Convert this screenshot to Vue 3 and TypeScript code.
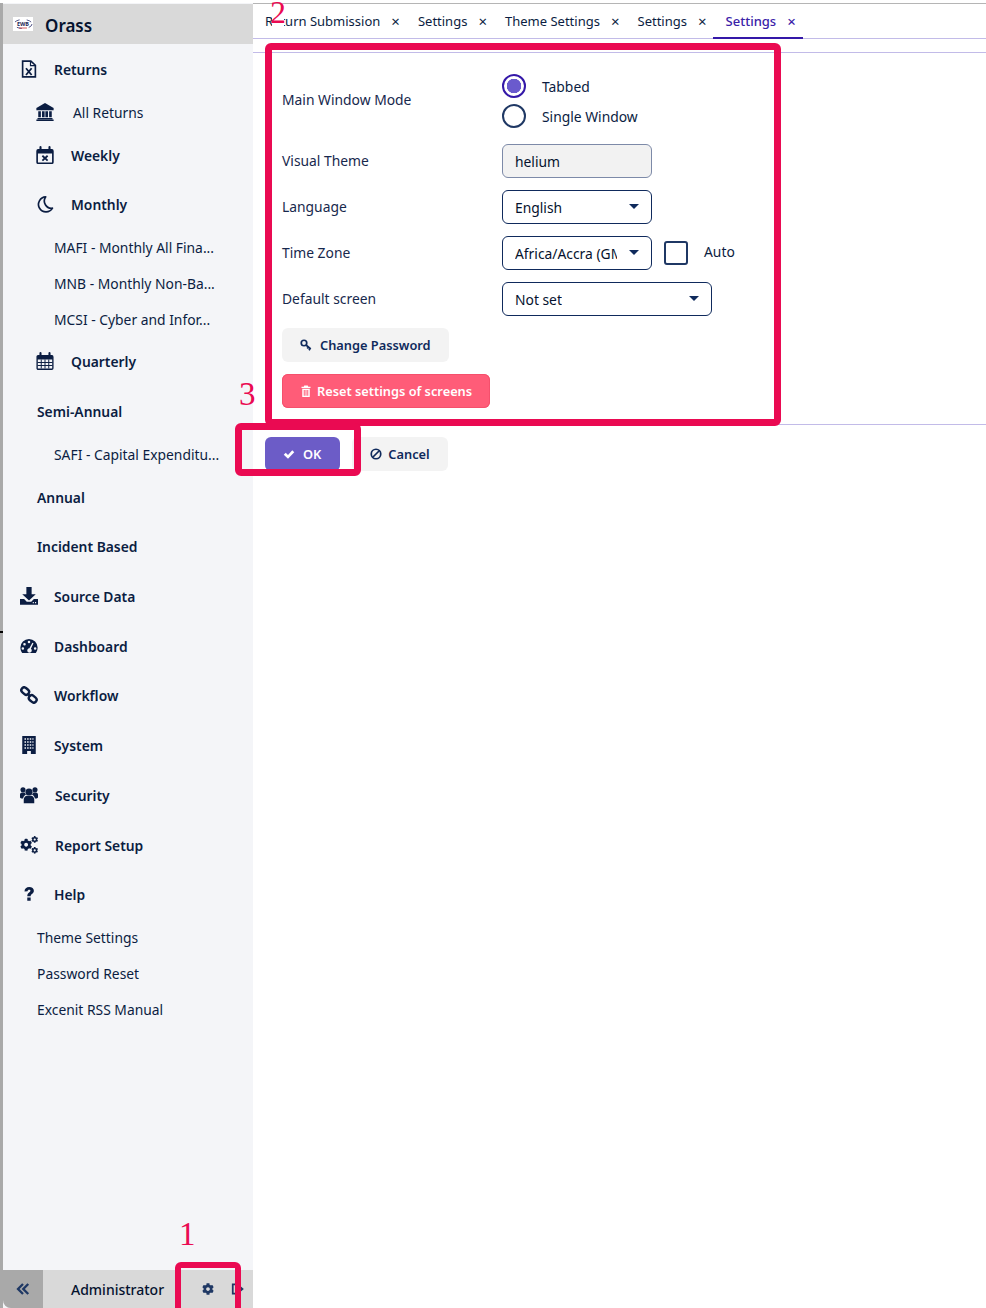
<script setup lang="ts">
type NavItem = {
  label: string
  h: number
  left: number
  icon?: string
  gap?: number
  strong?: boolean
}

const cogPath =
  'M487.4 315.7l-42.6-24.6c4.3-23.2 4.3-47 0-70.2l42.6-24.6c4.9-2.8 7.1-8.6 5.5-14-11.1-35.6-30-67.8-54.7-94.6-3.8-4.1-10-5.1-14.8-2.3L380.8 110c-17.9-15.4-38.5-27.3-60.8-35.1V25.8c0-5.6-3.9-10.5-9.4-11.7-36.7-8.2-74.3-7.8-109.2 0-5.5 1.2-9.4 6.1-9.4 11.7V75c-22.2 7.9-42.8 19.8-60.8 35.1L88.7 85.5c-4.9-2.8-11-1.9-14.8 2.3-24.7 26.7-43.6 58.9-54.7 94.6-1.7 5.4.6 11.2 5.5 14L67.3 221c-4.3 23.2-4.3 47 0 70.2l-42.6 24.6c-4.9 2.8-7.1 8.6-5.5 14 11.1 35.6 30 67.8 54.7 94.6 3.8 4.1 10 5.1 14.8 2.3l42.6-24.6c17.9 15.4 38.5 27.3 60.8 35.1v49.2c0 5.6 3.9 10.5 9.4 11.7 36.7 8.2 74.3 7.8 109.2 0 5.5-1.2 9.4-6.1 9.4-11.7v-49.2c22.2-7.9 42.8-19.8 60.8-35.1l42.6 24.6c4.9 2.8 11 1.9 14.8-2.3 24.7-26.7 43.6-58.9 54.7-94.6 1.5-5.5-.7-11.3-5.6-14.1zM256 336c-44.1 0-80-35.9-80-80s35.9-80 80-80 80 35.9 80 80-35.9 80-80 80z'

// icons are drawn on a 24x24 box, currentColor
const icons: Record<string, string> = {
  fileX:
    '<path d="M3.500 1.500h11L20.500 7v15.500h-17z" fill="none" stroke="currentColor" stroke-width="2.200"/><path d="M14 1.500V7.500h6.500" fill="none" stroke="currentColor" stroke-width="1.600"/><path d="M8 11l7.500 9M15.500 11L8 20" stroke="currentColor" stroke-width="2.400"/>',
  bank:
    '<path d="M12 0L0.500 6.500v3h23v-3z" fill="currentColor"/><path d="M3 11h3.500v8H3zM8 11h3.500v8H8zM12.500 11H16v8h-3.500zM17.500 11H21v8h-3.500zM2 20h20v1.500H2zM0.500 22h23v2h-23z" fill="currentColor"/>',
  calX:
    '<rect x="1.500" y="5" width="21" height="18" rx="1.500" fill="none" stroke="currentColor" stroke-width="2.200"/><path d="M1.500 5h21v5h-21z" fill="currentColor"/><path d="M6 1.500v5M18 1.500v5" stroke="currentColor" stroke-width="2.800" stroke-linecap="round"/><path d="M8.500 13l7 6.500M15.500 13l-7 6.500" stroke="currentColor" stroke-width="2.400"/>',
  moon:
    '<path d="M13 2.500A10 10 0 1 0 22 17.500 9.500 9.500 0 0 1 13 2.500z" fill="none" stroke="currentColor" stroke-width="2.200" stroke-linejoin="round"/>',
  calGrid:
    '<rect x="1.500" y="5" width="21" height="18" rx="1.500" fill="none" stroke="currentColor" stroke-width="1.800"/><path d="M1.500 5h21v5h-21z" fill="currentColor"/><path d="M6 1.500v5M18 1.500v5" stroke="currentColor" stroke-width="2.800" stroke-linecap="round"/><path d="M2 14h20M2 18h20M7 10v12M12 10v12M17 10v12" stroke="currentColor" stroke-width="1.300"/>',
  download:
    '<path d="M8.500 0h7v9.500h5.500l-9 8.500-9-8.500h5.500z" fill="currentColor"/><path fill-rule="evenodd" d="M0 16h5.500l3.500 3.500h6l3.500-3.500H24v7.500H0zM17 20h1.500v1.500H17zM20 20h1.500v1.500H20z" fill="currentColor"/>',
  gauge:
    '<path fill-rule="evenodd" d="M12 2.500A11.500 11.500 0 0 0 0.500 14c0 2.600 1 5.300 2.400 7.300h18.200c1.400-2 2.400-4.700 2.400-7.300A11.500 11.500 0 0 0 12 2.500zM12 5a1.700 1.700 0 1 1 0 3.400A1.700 1.700 0 0 1 12 5zM6 8a1.700 1.700 0 1 1 0 3.400A1.700 1.700 0 0 1 6 8zM3.800 13.500a1.700 1.700 0 1 1 0 3.400 1.700 1.700 0 0 1 0-3.400zM20.200 13.500a1.700 1.700 0 1 1 0 3.400 1.700 1.700 0 0 1 0-3.400zM16.500 7.500l1.500.8-3.500 7.200a3 3 0 1 1-2-.600z" fill="currentColor"/>',
  link:
    '<rect x="1.500" y="3" width="11" height="7.500" rx="3.700" transform="rotate(40 7 6.700)" fill="none" stroke="currentColor" stroke-width="3.200"/><rect x="11.500" y="13.500" width="11" height="7.500" rx="3.700" transform="rotate(40 17 17.200)" fill="none" stroke="currentColor" stroke-width="3.200"/><path d="M10 10l4 4" stroke="currentColor" stroke-width="3"/>',
  building:
    '<path fill-rule="evenodd" d="M3 0h18v24h-6.500v-4h-5v4H3zM6 3v2h2V3zM9.500 3v2h2V3zM13 3v2h2V3zM16.500 3v2h1.500V3zM6 7v2h2V7zM9.500 7v2h2V7zM13 7v2h2V7zM16.500 7v2h1.500V7zM6 11v2h2v-2zM9.500 11v2h2v-2zM13 11v2h2v-2zM16.500 11v2h1.500v-2zM6 15v2h2v-2zM9.500 15v2h2v-2zM13 15v2h2v-2zM16.500 15v2h1.500v-2z" fill="currentColor"/>',
  users:
    '<circle cx="12" cy="8" r="4.800" fill="currentColor"/><circle cx="4" cy="5" r="3.400" fill="currentColor"/><circle cx="20" cy="5" r="3.400" fill="currentColor"/><path d="M5 23v-5c0-3 2.500-5 4-5h6c1.500 0 4 2 4 5v5z" fill="currentColor"/><path d="M0 15v-3.500C0 9.800 1.200 8.500 2.800 8.500h3.400c.5 1.200 1.100 2.200 2 2.900-2 .8-3.600 2.600-4 5.100H2c-1 0-2-.5-2-1.500zM24 15v-3.500c0-1.700-1.200-3-2.800-3h-3.400c-.5 1.200-1.100 2.200-2 2.900 2 .8 3.600 2.600 4 5.100H22c1 0 2-.5 2-1.500z" fill="currentColor"/>',
  cogs:
    `<g transform="translate(0 3.500) scale(0.0320)"><path fill="currentColor" d="${cogPath}"/></g>` +
    `<g transform="translate(15 0) scale(0.0180)"><path fill="currentColor" d="${cogPath}"/></g>` +
    `<g transform="translate(15 14.500) scale(0.0180)"><path fill="currentColor" d="${cogPath}"/></g>`,
  question:
    '<path d="M6 8.500C6 4.500 8.800 2.500 12.300 2.500c3.700 0 6.200 2.100 6.200 5.200 0 4.200-4.300 4.300-4.300 7.300h-4.500c0-4.800 4.200-5 4.200-7.200 0-.9-.7-1.400-1.700-1.400-1.200 0-1.900.7-2.100 2zM9.700 16.500h4.500v4.500H9.700z" fill="currentColor"/>',
  cog: `<g transform="scale(0.0469)"><path fill="currentColor" d="${cogPath}"/></g>`,
  key:
    '<circle cx="8" cy="8" r="5.500" fill="none" stroke="currentColor" stroke-width="3.400"/><path d="M12 12l9.500 8M16.500 16l-2 3M20 19.500l-2 3" stroke="currentColor" stroke-width="3.400"/>',
  trash:
    '<path d="M8.500 1h7l1 2.500H21v2.500H3V3.500h4.500z" fill="currentColor"/><path fill-rule="evenodd" d="M4.500 7.500h15V24h-15zM7.500 10v11.500h2V10zM11 10v11.500h2V10zM14.500 10v11.500h2V10z" fill="currentColor"/>',
  check:
    '<path d="M1.500 13.500L5.500 9.500 10 14 18.500 4.500 22.500 8.500 10 21.500z" fill="currentColor"/>',
  ban:
    '<circle cx="12" cy="12" r="9.500" fill="none" stroke="currentColor" stroke-width="3.400"/><path d="M5.500 18.500l13-13" stroke="currentColor" stroke-width="3.400"/>',
  doubleLeft:
    '<path d="M12 3.500L3.500 12l8.500 8.500M21 3.500L12.500 12l8.500 8.500" fill="none" stroke="currentColor" stroke-width="4"/>',
  signOut:
    '<path d="M9 4H3v16h6" fill="none" stroke="currentColor" stroke-width="3"/><path d="M14 5l8 7-8 7v-4H8V9h6z" fill="currentColor"/>',
}

const nav: NavItem[] = [
  { label: 'Returns', h: 52, left: 20, icon: 'fileX', strong: true },
  { label: 'All Returns', h: 34, left: 36, icon: 'bank', gap: 19 },
  { label: 'Weekly', h: 52, left: 36, icon: 'calX', gap: 17, strong: true },
  { label: 'Monthly', h: 46, left: 36, icon: 'moon', gap: 17, strong: true },
  { label: 'MAFI - Monthly All Fina...', h: 40, left: 54 },
  { label: 'MNB - Monthly Non-Ba...', h: 32, left: 54 },
  { label: 'MCSI - Cyber and Infor...', h: 40, left: 54 },
  { label: 'Quarterly', h: 44, left: 36, icon: 'calGrid', gap: 17, strong: true },
  { label: 'Semi-Annual', h: 56, left: 37, strong: true },
  { label: 'SAFI - Capital Expenditu...', h: 30, left: 54 },
  { label: 'Annual', h: 56, left: 37, strong: true },
  { label: 'Incident Based', h: 42, left: 37, strong: true },
  { label: 'Source Data', h: 58, left: 20, icon: 'download', strong: true },
  { label: 'Dashboard', h: 42, left: 20, icon: 'gauge', strong: true },
  { label: 'Workflow', h: 56, left: 20, icon: 'link', strong: true },
  { label: 'System', h: 44, left: 20, icon: 'building', strong: true },
  { label: 'Security', h: 56, left: 20, icon: 'users', gap: 17, strong: true },
  { label: 'Report Setup', h: 44, left: 20, icon: 'cogs', gap: 17, strong: true },
  { label: 'Help', h: 54, left: 20, icon: 'question', strong: true },
  { label: 'Theme Settings', h: 32, left: 37 },
  { label: 'Password Reset', h: 40, left: 37 },
  { label: 'Excenit RSS Manual', h: 32, left: 37 },
]

const tabs = ['Return Submission', 'Settings', 'Theme Settings', 'Settings', 'Settings']
const activeTab = 4
</script>

<template>
  <div class="page">
    <aside class="sidebar">
      <header class="brand">
        <svg class="logo" viewBox="0 0 20 14">
          <rect width="20" height="14" fill="#fff" />
          <ellipse cx="10" cy="7" rx="9" ry="4.500" fill="none" stroke="#2b2f6b" stroke-width="0.800" stroke-dasharray="5 7" />
          <text x="10" y="8.500" text-anchor="middle" font-size="5.500" font-weight="700" fill="#1c2452">EWB</text>
          <path d="M6 11h8" stroke="#c33" stroke-width="0.800" />
        </svg>
        <span class="brand-name">Orass</span>
      </header>

      <nav class="nav">
        <div
          v-for="item in nav"
          :key="item.label"
          class="nav-row"
          :class="{ strong: item.strong }"
          :style="{ height: item.h + 'px', paddingLeft: item.left + 'px' }"
        >
          <svg
            v-if="item.icon"
            class="nav-icon"
            viewBox="0 0 24 24"
            :style="{ marginRight: (item.gap ?? 16) + 'px' }"
            v-html="icons[item.icon]"
          ></svg>
          <span>{{ item.label }}</span>
        </div>
      </nav>

      <footer class="side-footer">
        <div class="collapse">
          <svg class="foot-icon collapse-icon" viewBox="0 0 24 24" v-html="icons.doubleLeft"></svg>
        </div>
        <span class="user">Administrator</span>
        <svg class="foot-icon gear" viewBox="0 0 24 24" v-html="icons.cog"></svg>
        <svg class="foot-icon signout" viewBox="0 0 24 24" v-html="icons.signOut"></svg>
      </footer>
    </aside>

    <main class="main">
      <div class="tabs">
        <div v-for="(tab, i) in tabs" :key="i" class="tab" :class="{ active: i === activeTab }">
          <span>{{ tab }}</span>
          <span class="close">×</span>
        </div>
      </div>

      <section class="form">
        <div class="field-label first">Main Window Mode</div>
        <div class="radios">
          <label class="radio-row">
            <span class="radio checked"></span>
            <span>Tabbed</span>
          </label>
          <label class="radio-row">
            <span class="radio"></span>
            <span>Single Window</span>
          </label>
        </div>

        <div class="field-label">Visual Theme</div>
        <div class="control readonly">helium</div>

        <div class="field-label">Language</div>
        <div class="control select">
          <span class="value">English</span>
          <i class="caret"></i>
        </div>

        <div class="field-label">Time Zone</div>
        <div class="tz">
          <div class="control select">
            <span class="value">Africa/Accra (GMT+00:00)</span>
            <i class="caret"></i>
          </div>
          <span class="checkbox"></span>
          <span class="auto">Auto</span>
        </div>

        <div class="field-label">Default screen</div>
        <div class="control select wide">
          <span class="value">Not set</span>
          <i class="caret"></i>
        </div>

        <div class="btn-line">
          <button class="btn plain">
            <svg class="btn-icon" viewBox="0 0 24 24" v-html="icons.key"></svg>
            Change Password
          </button>
        </div>
        <div class="btn-line">
          <button class="btn danger">
            <svg class="btn-icon" viewBox="0 0 24 24" v-html="icons.trash"></svg>
            Reset settings of screens
          </button>
        </div>
      </section>

      <div class="actions">
        <button class="btn primary">
          <svg class="btn-icon" viewBox="0 0 24 24" v-html="icons.check"></svg>
          OK
        </button>
        <button class="btn plain cancel">
          <svg class="btn-icon" viewBox="0 0 24 24" v-html="icons.ban"></svg>
          Cancel
        </button>
      </div>
    </main>

    <!-- hand-drawn callouts that sit over the screenshot -->
    <div class="callout box-one"></div>
    <div class="callout box-two"></div>
    <div class="callout box-three"></div>
    <span class="mark mark-one">1</span>
    <span class="mark mark-two">2</span>
    <span class="mark mark-three">3</span>
    <i class="tick"></i>
  </div>
</template>

<style scoped>
.page {
  position: relative;
  display: flex;
  height: 1308px;
  overflow: hidden;
  padding-top: 3px;
  box-sizing: border-box;
  background: #fff;
  color: #0b1d42;
  font-family: "Noto Sans", "Open Sans", sans-serif;
  font-size: 13.85px;
}

.page::before {
  content: "";
  position: absolute;
  left: 0;
  right: 0;
  top: 3px;
  height: 1px;
  background: #b5b5b5;
}

.sidebar {
  display: flex;
  flex-direction: column;
  flex: none;
  width: 250px;
  border-left: 3px solid #a9a9a9;
  background: #f4f5f8;
  z-index: 1;
}

.brand {
  display: flex;
  align-items: center;
  flex: none;
  height: 40px;
  margin-top: 1px;
  padding-left: 10px;
  background: #d9d9d9;
}

.logo {
  width: 20px;
  height: 14px;
  margin-right: 12px;
}

.brand-name {
  margin-top: 2px;
  color: #05122e;
  font-size: 17px;
  font-weight: 600;
}

.nav {
  flex: 1;
  margin-top: -1px;
}

.nav-row {
  display: flex;
  align-items: center;
  box-sizing: border-box;
  margin-left: -3px;
  white-space: nowrap;
}

.nav-row.strong {
  font-weight: 600;
}

.nav-icon {
  flex: none;
  width: 18px;
  height: 18px;
}

.side-footer {
  position: relative;
  display: flex;
  align-items: center;
  flex: none;
  height: 38px;
  background: #d9d9d9;
  border-bottom-left-radius: 8px;
}

.collapse {
  display: flex;
  align-items: center;
  justify-content: center;
  align-self: stretch;
  width: 40px;
  background: #a9a9a9;
  border-bottom-left-radius: 8px;
}

.foot-icon {
  width: 14px;
  height: 14px;
}

.collapse-icon {
  color: #1f3864;
}

.user {
  margin-left: 28px;
  font-size: 14px;
  font-weight: 500;
  color: #05122e;
}

.gear {
  margin-left: 38px;
  width: 12px;
  height: 12px;
  color: #1f3864;
}

.signout {
  margin-left: 17px;
  color: #1f3864;
}

.main {
  flex: 1;
  min-width: 0;
}

.tabs {
  display: flex;
  height: 35px;
  box-sizing: border-box;
  margin-top: 1px;
  border-bottom: 1px solid #c2bbe8;
}

.tab {
  display: flex;
  align-items: center;
  gap: 11px;
  height: 35px;
  box-sizing: border-box;
  padding: 0 6px 2px 12px;
  font-size: 13px;
  white-space: nowrap;
}

.tab.active {
  padding: 0 7px 0 13px;
  border-bottom: 2px solid #3418a8;
  color: #3a22a8;
  font-weight: 500;
}

.close {
  margin-top: 2px;
  font-size: 15px;
  line-height: 1;
}

.form {
  display: grid;
  grid-template-columns: 220px 1fr;
  row-gap: 12px;
  align-items: center;
  margin-top: 13px;
  padding: 18px 0 16px 29px;
  border-top: 1px solid #c2bbe8;
  border-bottom: 1px solid #c2bbe8;
}

.field-label {
  margin-bottom: 2px;
  color: #17284d;
}

.field-label.first {
  margin-bottom: 4px;
}

.radios {
  display: flex;
  flex-direction: column;
  margin-bottom: 1px;
}

.radio-row {
  display: flex;
  align-items: center;
  gap: 16px;
  height: 30px;
}

.radio {
  display: block;
  box-sizing: border-box;
  width: 24px;
  height: 24px;
  border: 2px solid #1f3864;
  border-radius: 50%;
}

.radio.checked {
  border-color: #3418a8;
  background: radial-gradient(circle, #6a5acd 0 7px, #fff 7.5px);
}

.control {
  display: flex;
  align-items: center;
  box-sizing: border-box;
  width: 150px;
  height: 34px;
  padding: 0 12px;
  border: 1px solid #0f2a5c;
  border-radius: 6px;
  color: #05122e;
}

.control.readonly {
  border-color: #7d8aa8;
  background: #f2f2f2;
}

.control.wide {
  width: 210px;
}

.select {
  justify-content: space-between;
}

.value {
  overflow: hidden;
  flex: none;
  max-width: 102px;
  white-space: nowrap;
}

.caret {
  width: 0;
  height: 0;
  margin-bottom: 2px;
  border-top: 5px solid #0f2a5c;
  border-left: 5px solid transparent;
  border-right: 5px solid transparent;
}

.tz {
  display: flex;
  align-items: center;
}

.checkbox {
  box-sizing: border-box;
  width: 24px;
  height: 24px;
  margin: 0 0 1px 12px;
  border: 2px solid #1f3864;
  border-radius: 3px;
}

.auto {
  margin: 0 0 3px 16px;
}

.btn-line {
  grid-column: 1 / -1;
}

.btn {
  display: inline-flex;
  align-items: center;
  gap: 8px;
  height: 34px;
  padding: 0 18px;
  border: none;
  border-radius: 6px;
  font-family: inherit;
  font-size: 12.8px;
  font-weight: 600;
}

.btn-icon {
  width: 12px;
  height: 12px;
}

.plain {
  background: #f3f3f3;
  color: #0f2a5c;
}

.cancel {
  gap: 6px;
}

.danger {
  gap: 5px;
  background: #ff5c78;
  box-shadow: inset 0 0 0 1px #f5506c;
  color: #fff;
}

.primary {
  padding-right: 19px;
  background: #6c5cc7;
  color: #fff;
  border-bottom: 1px solid #3f5bd8;
}

.actions {
  display: flex;
  gap: 12px;
  margin-top: 12px;
  padding-left: 12px;
}

.callout {
  position: absolute;
  box-sizing: border-box;
  border: 7px solid #ea0a52;
  border-radius: 6px;
  z-index: 2;
}

.box-one {
  left: 175px;
  top: 1262px;
  width: 66px;
  height: 60px;
  border-width: 6px;
}

.box-two {
  left: 265px;
  top: 43px;
  width: 516px;
  height: 383px;
}

.box-three {
  left: 235px;
  top: 423px;
  width: 126px;
  height: 53px;
}

.mark {
  position: absolute;
  color: #ea0a52;
  font-family: "Liberation Serif", serif;
  font-size: 33px;
  line-height: 1;
  z-index: 3;
}

.mark-one {
  left: 179px;
  top: 1218px;
}

.mark-two {
  left: 270px;
  top: -4px;
  font-size: 32px;
}

/* the numeral was pasted over the tab text and hides two letters */
.mark-two::before {
  content: "";
  position: absolute;
  z-index: -1;
  left: 2px;
  top: 18px;
  width: 12px;
  height: 12px;
  background: #fff;
}

.mark-three {
  left: 239px;
  top: 378px;
}

.tick {
  position: absolute;
  left: 0;
  top: 631px;
  width: 3px;
  height: 2px;
  background: #000;
  z-index: 2;
}
</style>
